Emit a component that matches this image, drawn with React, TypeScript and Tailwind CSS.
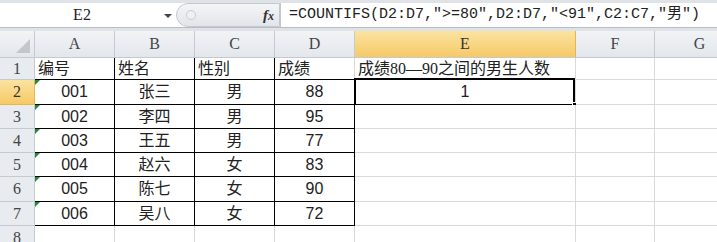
const cols = [
  { key: "A", w: "w-[80px]" },
  { key: "B", w: "w-[80px]" },
  { key: "C", w: "w-[80px]" },
  { key: "D", w: "w-[80px]" },
  { key: "E", w: "w-[221px]" },
  { key: "F", w: "w-[79px]" },
  { key: "G", w: "w-[90px]" },
];

const rows = [
  { n: 1, h: "h-[22px]", cells: ["编号", "姓名", "性别", "成绩", "成绩80—90之间的男生人数"] },
  { n: 2, h: "h-[25px]", cells: ["001", "张三", "男", "88", "1"] },
  { n: 3, h: "h-[24px]", cells: ["002", "李四", "男", "95"] },
  { n: 4, h: "h-[24px]", cells: ["003", "王五", "男", "77"] },
  { n: 5, h: "h-[24px]", cells: ["004", "赵六", "女", "83"] },
  { n: 6, h: "h-[25px]", cells: ["005", "陈七", "女", "90"] },
  { n: 7, h: "h-[24px]", cells: ["006", "吴八", "女", "72"] },
  { n: 8, h: "h-[24px]", cells: [] as string[] },
];

const serif = "font-['Liberation_Serif','Noto_Sans_CJK_SC',serif]";
const sans = "font-['Liberation_Sans','Noto_Sans_CJK_SC',sans-serif]";

function FormulaBar() {
  return (
    <div className="flex h-[31px] flex-col bg-[#dfe3e8]">
      <div className="mt-[3px] flex h-[25px] border-b border-[#b9bec6] bg-white">
        <div className="relative flex w-[176px] items-center justify-center">
          <span className={`${serif} pr-[12px] text-[16px] text-[#222]`}>E2</span>
          <span className="absolute left-[164px] top-[11px] h-0 w-0 border-x-[4px] border-t-[4px] border-x-transparent border-t-[#444]" />
        </div>
        <div className="flex w-[104px] items-center rounded-l-[12px] border border-[#c3c8cf] bg-gradient-to-b from-[#f4f5f7] to-[#e2e5e9]">
          <span className="ml-[9px] h-[10px] w-[10px] rounded-full border border-[#c9ccd1] bg-[#eef0f2]" />
          <span className="ml-auto mr-[5px] font-['Liberation_Serif',serif] text-[15px] font-bold italic text-[#333]">
            f<span className="text-[12px]">x</span>
          </span>
        </div>
        <div className="flex flex-1 items-center border-l border-[#c3c8cf] pl-[8px]">
          <span className="font-['Liberation_Mono','Noto_Sans_CJK_SC',monospace] text-[15px] whitespace-nowrap text-[#222]">
            =COUNTIFS(D2:D7,"&gt;=80",D2:D7,"&lt;91",C2:C7,"男")
          </span>
        </div>
      </div>
    </div>
  );
}

function HeaderRow() {
  return (
    <div className="flex h-[27px] border-b border-[#c5cad1]">
      <div className="relative w-[35px] shrink-0 border-r border-[#c5cad1] bg-gradient-to-b from-[#f1f3f6] to-[#e3e7ec]">
        <span className="absolute bottom-[4px] right-[4px] h-0 w-0 border-b-[14px] border-l-[14px] border-b-[#c3c7cc] border-l-transparent" />
      </div>
      {cols.map((c) => (
        <div
          key={c.key}
          className={`${c.w} flex shrink-0 items-center justify-center border-r ${serif} text-[16px] ${
            c.key === "E"
              ? "border-[#e9b44f] bg-gradient-to-b from-[#fbe3a0] to-[#f6c965] text-[#333]"
              : "border-[#c5cad1] bg-gradient-to-b from-[#f1f3f6] to-[#e3e7ec] text-[#444]"
          }`}
        >
          {c.key}
        </div>
      ))}
    </div>
  );
}

function Row({ r }: { r: (typeof rows)[number] }) {
  const inTable = r.n <= 7;
  return (
    <div className={`flex ${r.h}`}>
      <div
        className={`flex w-[35px] shrink-0 items-center justify-center border-b border-r ${serif} text-[16px] ${
          r.n === 2
            ? "border-[#e9b44f] bg-gradient-to-b from-[#fbe3a0] to-[#f6c965] text-[#333]"
            : "border-[#c5cad1] bg-[#e8ebef] text-[#444]"
        }`}
      >
        {r.n}
      </div>
      {cols.map((c, i) => {
        const text = r.cells[i];
        const tableCell = inTable && i < 4;
        const borderR = tableCell && !(r.n === 1 && i === 3) ? "border-r-black" : "border-r-[#d9d9d9]";
        const borderB = tableCell ? "border-b-black" : "border-b-[#d9d9d9]";
        const align = r.n === 1 ? "justify-start pl-[3px]" : "justify-center";
        const isNum = r.n > 1 && (i === 0 || i === 3 || i === 4);
        return (
          <div
            key={c.key}
            className={`${c.w} relative flex shrink-0 items-center border-b border-r ${borderR} ${borderB} ${align} bg-white ${
              isNum ? sans : serif
            } text-[16px] whitespace-nowrap text-[#222]`}
          >
            {i === 0 && r.n >= 2 && r.n <= 7 && (
              <span className="absolute left-0 top-0 h-0 w-0 border-r-[5px] border-t-[5px] border-r-transparent border-t-[#1e8c3a]" />
            )}
            {text}
            {r.n === 2 && c.key === "E" && (
              <>
                <span className="absolute -left-[1px] -top-[2px] bottom-[-2px] right-0 border-2 border-black" />
                <span className="absolute -bottom-[4px] -right-[3px] h-[6px] w-[6px] border border-white bg-black" />
              </>
            )}
          </div>
        );
      })}
    </div>
  );
}

export default function App() {
  return (
    <div className="h-[242px] w-[717px] overflow-hidden bg-white">
      <FormulaBar />
      <HeaderRow />
      {rows.map((r) => (
        <Row key={r.n} r={r} />
      ))}
    </div>
  );
}
